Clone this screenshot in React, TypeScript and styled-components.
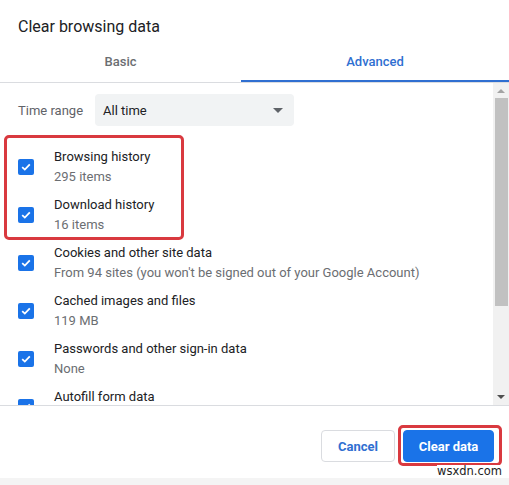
import React from 'react';
import styled, {createGlobalStyle} from 'styled-components';

const GlobalStyle = createGlobalStyle`
  html, body {
    margin: 0;
    padding: 0;
    background: #ffffff;
  }
  body {
    font-family: Roboto, "Liberation Sans", Arial, sans-serif;
    -webkit-font-smoothing: antialiased;
  }
`;

const Dialog = styled.div`
  position: relative;
  width: 509px;
  height: 485px;
  background: #ffffff;
  display: flex;
  flex-direction: column;
  overflow: hidden;
`;

const Title = styled.div`
  padding: 17px 18px 0;
  height: 26px;
  line-height: 20px;
  font-size: 16px;
  color: #202124;
`;

const Tabs = styled.div`
  display: grid;
  grid-template-columns: 241px 1fr;
  height: 40px;
  border-bottom: 1px solid #dadce0;
`;

const Tab = styled.div<{ $active?: boolean }>`
  display: flex;
  align-items: center;
  justify-content: center;
  font-size: 13px;
  font-weight: 500;
  color: ${p => (p.$active ? '#2f6fd1' : '#6b6e72')};
  border-bottom: 2px solid ${p => (p.$active ? '#2f6fd1' : 'transparent')};
`;

const Body = styled.div`
  position: relative;
  display: flex;
  height: 322px;
  border-bottom: 1px solid #dadce0;
`;

const Content = styled.div`
  flex: 1;
  overflow: hidden;
  padding: 11px 0 0 18px;
`;

const TimeRow = styled.div`
  display: flex;
  align-items: center;
  height: 32px;
  margin-bottom: 17px;
`;

const TimeLabel = styled.span`
  font-size: 13px;
  color: #5f6368;
  width: 77px;
`;

const Select = styled.div`
  display: flex;
  align-items: center;
  justify-content: space-between;
  width: 199px;
  height: 32px;
  box-sizing: border-box;
  padding: 0 8px 0 8px;
  border-radius: 4px;
  background: #f1f3f4;
  font-size: 13px;
  color: #202124;
`;

const Caret = styled.span`
  width: 0;
  height: 0;
  border-left: 5px solid transparent;
  border-right: 5px solid transparent;
  border-top: 5px solid #5f6368;
  margin-right: 3px;
`;

const Row = styled.div`
  display: flex;
  align-items: center;
  gap: 20px;
  height: 48px;
`;

const Box = styled.span`
  flex: none;
  width: 16px;
  height: 16px;
  border-radius: 2px;
  background: #1a73e8;
  display: flex;
  align-items: center;
  justify-content: center;
`;

const Texts = styled.div`
  display: flex;
  flex-direction: column;
`;

const Label = styled.span`
  font-size: 13px;
  line-height: 20px;
  color: #202124;
`;

const Sub = styled.span`
  font-size: 13px;
  line-height: 20px;
  color: #6b6e72;
`;

const Scrollbar = styled.div`
  width: 16px;
  background: #f1f1f1;
  display: flex;
  flex-direction: column;
  align-items: center;
`;

const Arrow = styled.span<{ $down?: boolean }>`
  margin: ${p => (p.$down ? 'auto 0 6px' : '6px 0 0')};
  width: 0;
  height: 0;
  border-left: 4px solid transparent;
  border-right: 4px solid transparent;
  ${p =>
    p.$down
      ? 'border-top: 4px solid #505050;'
      : 'border-bottom: 4px solid #a3a3a3;'}
`;

const Thumb = styled.div`
  margin-top: 5px;
  width: 13px;
  height: 208px;
  background: #c1c1c1;
`;

const Highlight = styled.div`
  position: absolute;
  left: 4px;
  top: 52px;
  width: 180px;
  height: 105px;
  box-sizing: border-box;
  border: 3px solid #d9393f;
  border-radius: 5px;
  pointer-events: none;
`;

const Footer = styled.div`
  display: flex;
  justify-content: flex-end;
  align-items: flex-start;
  gap: 8px;
  height: 72px;
  box-sizing: border-box;
  padding: 24px 15px 0 0;
`;

const Button = styled.button<{ $primary?: boolean }>`
  height: 32px;
  box-sizing: border-box;
  padding: 0;
  width: ${p => (p.$primary ? '91px' : '74px')};
  border-radius: 4px;
  border: 1px solid ${p => (p.$primary ? '#1a73e8' : '#dadce0')};
  background: ${p => (p.$primary ? '#1a73e8' : '#ffffff')};
  color: ${p => (p.$primary ? '#ffffff' : '#2f6fd1')};
  font-family: inherit;
  font-size: 13px;
  font-weight: 700;
`;

const Marked = styled.div`
  position: relative;
  &::after {
    content: '';
    position: absolute;
    left: -5px;
    top: -5px;
    right: -8px;
    bottom: -4px;
    border: 3px solid #d9393f;
    border-radius: 5px;
    pointer-events: none;
  }
`;

const Strip = styled.div`
  height: 7px;
  background: #f4f4f4;
`;

const Watermark = styled.span`
  position: absolute;
  left: 437px;
  top: 465px;
  font-family: "DejaVu Sans", Verdana, sans-serif;
  font-size: 11.5px;
  color: #222222;
  background: #ffffff;
  line-height: 13px;
`;

const Check = () => (
  <svg width="12" height="12" viewBox="0 0 12 12">
    <path d="M2.2 6.2 L4.8 8.6 L9.8 3.4" fill="none" stroke="#fff" strokeWidth="1.8"/>
  </svg>
);

const items = [
  {label: 'Browsing history', sub: '295 items'},
  {label: 'Download history', sub: '16 items'},
  {label: 'Cookies and other site data', sub: "From 94 sites (you won't be signed out of your Google Account)"},
  {label: 'Cached images and files', sub: '119 MB'},
  {label: 'Passwords and other sign-in data', sub: 'None'},
  {label: 'Autofill form data', sub: ''},
];

export default function App() {
  return (
    <>
      <GlobalStyle/>
      <Dialog>
        <Title>Clear browsing data</Title>
        <Tabs>
          <Tab>Basic</Tab>
          <Tab $active>Advanced</Tab>
        </Tabs>
        <Body>
          <Content>
            <TimeRow>
              <TimeLabel>Time range</TimeLabel>
              <Select>
                All time
                <Caret/>
              </Select>
            </TimeRow>
            {items.map(it => (
              <Row key={it.label}>
                <Box><Check/></Box>
                <Texts>
                  <Label>{it.label}</Label>
                  <Sub>{it.sub || '\u00a0'}</Sub>
                </Texts>
              </Row>
            ))}
          </Content>
          <Scrollbar>
            <Arrow/>
            <Thumb/>
            <Arrow $down/>
          </Scrollbar>
          <Highlight/>
        </Body>
        <Footer>
          <Button>Cancel</Button>
          <Marked>
            <Button $primary>Clear data</Button>
          </Marked>
        </Footer>
        <Strip/>
        <Watermark>wsxdn.com</Watermark>
      </Dialog>
    </>
  );
}
